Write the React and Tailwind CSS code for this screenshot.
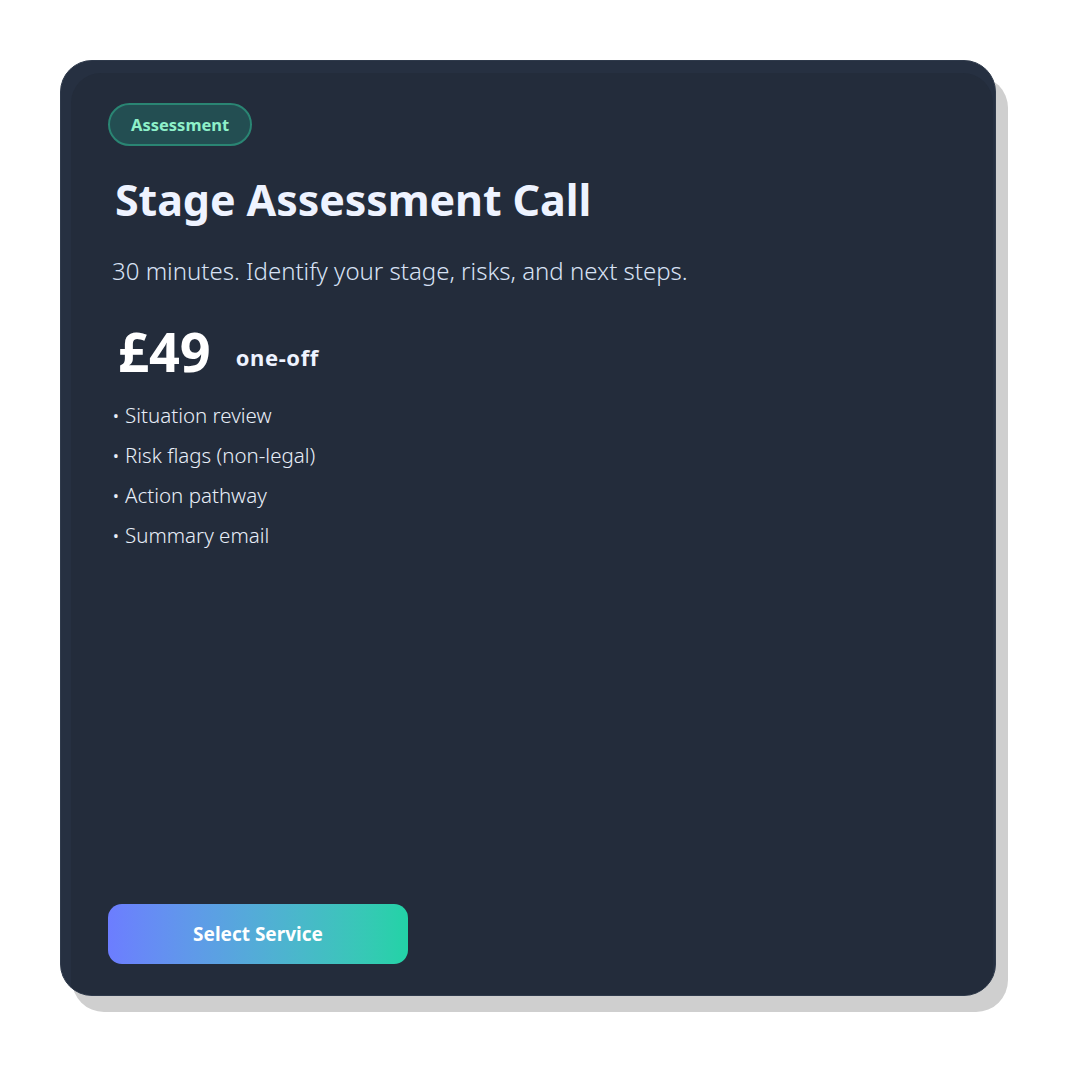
import React from 'react';

const features = ['Situation review', 'Risk flags (non-legal)', 'Action pathway', 'Summary email'];

const App = () => {
  return (
    <div
      className="w-[1080px] h-[1080px] bg-white pt-[60px] pl-[60px]"
      style={{ fontFamily: '"Noto Sans", "Open Sans", sans-serif' }}
    >
      <div className="relative w-[936px] h-[936px]">
        <div className="absolute left-[12px] top-[16px] w-[936px] h-[936px] rounded-[32px] bg-[#cfcfcf]" />
        <div className="relative w-full h-full rounded-[32px] bg-[#263041] border border-[#2f3a4b] pt-[12px] pl-[10px] pr-[2px] overflow-hidden">
          <div className="w-full h-full rounded-t-[30px] bg-[#232c3b] flex flex-col pl-[37px] pt-[30px] pb-[31px]">
            <div className="self-start h-[43px] pt-[1px] px-[21px] rounded-full bg-[#234e52] border-2 border-[#2a8573] flex items-center text-[16.5px] font-bold text-[#8ef0c9]">
              Assessment
            </div>
            <h1 className="mt-[26px] ml-[7px] text-[43px] leading-[56px] font-bold text-[#eef3ff] tracking-[-0.1px]">
              Stage Assessment Call
            </h1>
            <p className="mt-[27px] ml-[4px] text-[24px] leading-[32px] text-[#d8e2f5] font-light">
              30 minutes. Identify your stage, risks, and next steps.
            </p>
            <div className="mt-[33px] ml-[10px] flex items-center gap-[25px]">
              <span className="text-[54px] leading-[62px] font-bold text-white">£49</span>
              <span className="mt-[12px] text-[22px] font-bold text-[#eef3ff] tracking-[0.6px]">one-off</span>
            </div>
            <ul className="mt-[13px] ml-[4px] flex flex-col">
              {features.map((f) => (
                <li key={f} className="h-[40px] flex items-center text-[20.5px] text-[#e8eef8] font-light">
                  • {f}
                </li>
              ))}
            </ul>
            <button className="mt-auto w-[300px] h-[60px] rounded-[14px] bg-gradient-to-r from-[#6c7dff] to-[#22d3a6] text-white text-[19px] font-bold">
              Select Service
            </button>
          </div>
        </div>
      </div>
    </div>
  );
};

export default App;
